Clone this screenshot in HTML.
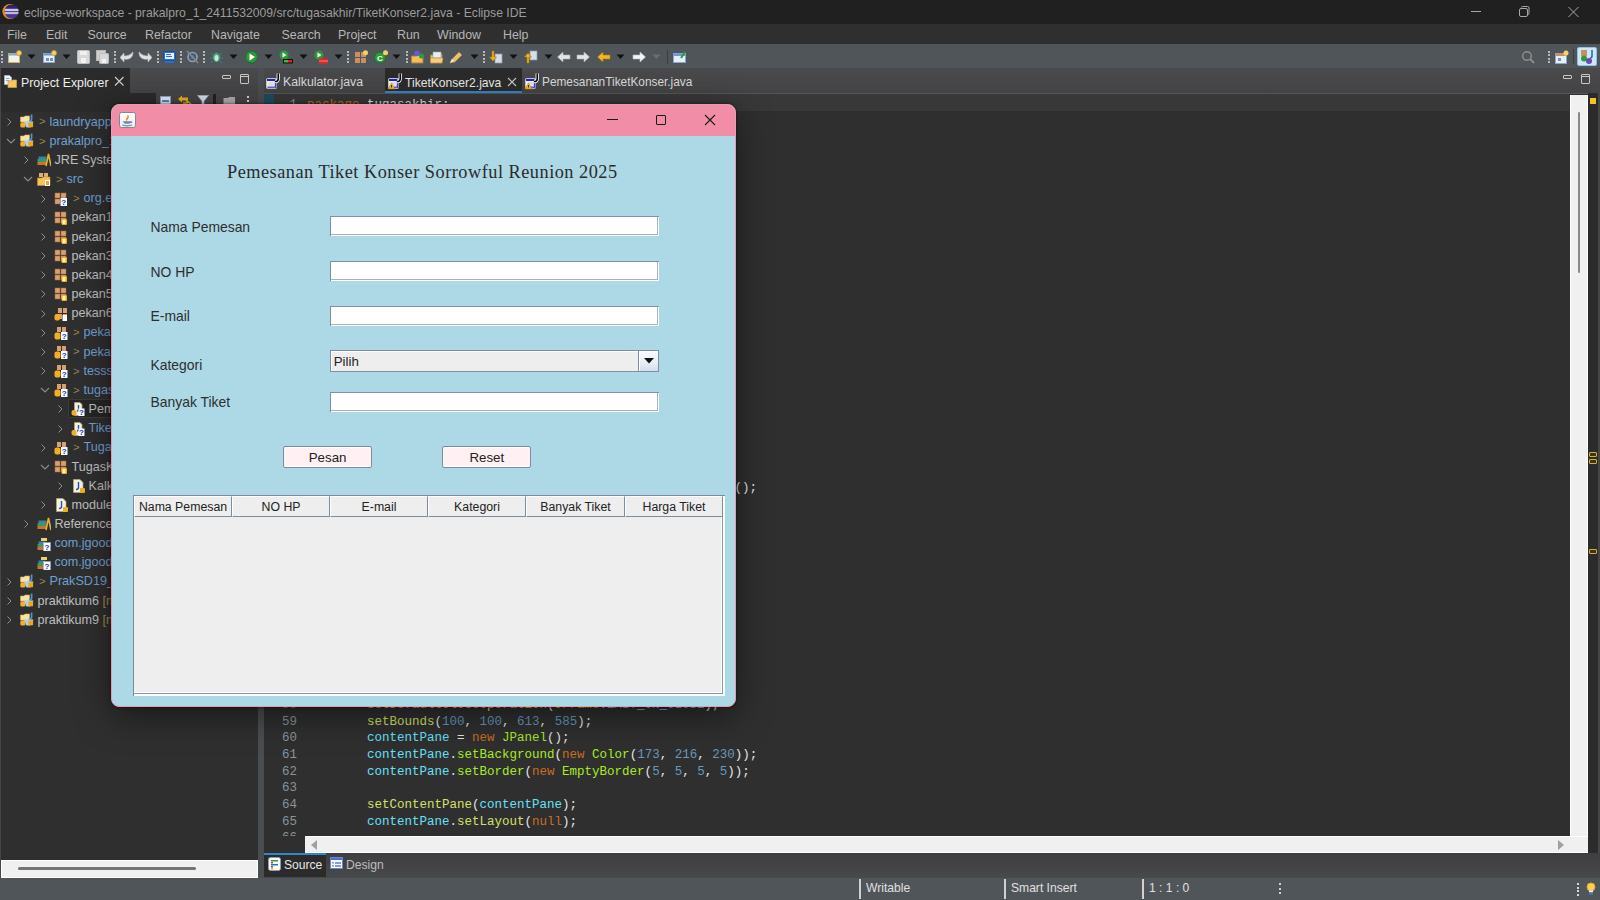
<!DOCTYPE html>
<html><head><meta charset="utf-8">
<style>
*{margin:0;padding:0;box-sizing:border-box}
html,body{width:1600px;height:900px;overflow:hidden;background:#2f2f2f;font-family:"Liberation Sans",sans-serif}
.a{position:absolute}
.t{position:absolute;white-space:nowrap;line-height:1}
svg{display:block}
</style></head><body>
<div class="a" style="left:0px;top:0px;width:1600px;height:24px;background:#202020;"></div>
<div class="a" style="left:0px;top:24px;width:1600px;height:20px;background:#2f2f2f;"></div>
<div class="a" style="left:0px;top:44px;width:1600px;height:24px;background:#50555a;"></div>
<div class="a" style="left:0px;top:68px;width:1600px;height:810px;background:#464647;"></div>
<div class="a" style="left:0px;top:68px;width:258px;height:25px;background:#464647;background:linear-gradient(#4a4a4c,#444446)"></div>
<div class="a" style="left:1px;top:68px;width:129px;height:25px;background:#2b2b2b;"></div>
<div class="a" style="left:1px;top:93px;width:257px;height:767px;background:#2f2f2f;"></div>
<div class="a" style="left:1px;top:93px;width:155px;height:19px;background:#2b2b2b;"></div>
<div class="a" style="left:156px;top:93px;width:102px;height:19px;background:#464647;"></div>
<div class="a" style="left:1px;top:860px;width:257px;height:18px;background:#ffffff;"></div>
<div class="a" style="left:2px;top:861px;width:255px;height:16px;background:#f0f0f0;"></div>
<div class="a" style="left:18px;top:867px;width:178px;height:3px;background:#747474;border-radius:1.5px"></div>
<div class="a" style="left:258px;top:68px;width:6px;height:810px;background:#4b4e50;"></div>
<div class="a" style="left:264px;top:68px;width:1336px;height:25px;background:#464647;background:linear-gradient(#4a4a4c,#444446)"></div>
<div class="a" style="left:385px;top:68px;width:137px;height:25px;background:#2b2b2b;"></div>
<div class="a" style="left:385px;top:91px;width:137px;height:2px;background:#3584c9;"></div>
<div class="a" style="left:264px;top:93px;width:1336px;height:760px;background:#2f2f2f;"></div>
<div class="a" style="left:264px;top:93px;width:1336px;height:1px;background:#555555;"></div>
<div class="a" style="left:264px;top:94px;width:1306px;height:17px;background:#383838;"></div>
<div class="a" style="left:1570px;top:95px;width:18px;height:758px;background:#f0f0f0;border-left:1px solid #fff;border-right:1px solid #fff;border-bottom:1px solid #fff"></div>
<div class="a" style="left:1578px;top:112px;width:2px;height:161px;background:#8a8a8a;border-radius:1px"></div>
<div class="a" style="left:1588px;top:93px;width:10px;height:760px;background:#2b2b2b;"></div>
<div class="a" style="left:1598px;top:93px;width:2px;height:785px;background:#464647;"></div>
<div class="a" style="left:1590px;top:98px;width:6px;height:6px;background:#f2c12e;"></div>
<div class="a" style="left:1589px;top:452px;width:8px;height:5px;background:#3a3420;border:1px solid #d4b030;border-radius:1px"></div>
<div class="a" style="left:1589px;top:459px;width:8px;height:5px;background:#3a3420;border:1px solid #d4b030;border-radius:1px"></div>
<div class="a" style="left:1589px;top:549px;width:8px;height:5px;background:#3a3420;border:1px solid #d4b030;border-radius:1px"></div>
<div class="a" style="left:305px;top:836px;width:1283px;height:17px;background:#f0f0f0;border-top:1px solid #fff;border-bottom:1px solid #fff"></div>
<svg class="a" style="left:310px;top:840px;" width="8" height="10" viewBox="0 0 8 10"><path d="M7 0 L1 5 L7 10 Z" fill="#a0a0a0"/></svg>
<svg class="a" style="left:1557px;top:840px;" width="8" height="10" viewBox="0 0 8 10"><path d="M1 0 L7 5 L1 10 Z" fill="#a0a0a0"/></svg>
<div class="a" style="left:264px;top:853px;width:1336px;height:25px;background:#434547;background:linear-gradient(#3e3e40,#48494b)"></div>
<div class="a" style="left:264px;top:853px;width:62px;height:24px;background:#2b2b2b;"></div>
<div class="a" style="left:264px;top:853px;width:62px;height:2px;background:#3584c9;"></div>
<div class="a" style="left:0px;top:878px;width:1600px;height:22px;background:#50555a;"></div>
<svg class="a" style="left:0px;top:0px;" width="24" height="24" viewBox="0 0 24 24"><defs><clipPath id="ec"><circle cx="11.6" cy="11.5" r="7.1"/></clipPath><linearGradient id="eg" x1="0" y1="0" x2="0" y2="1"><stop offset="0" stop-color="#2a1f66"/><stop offset="1" stop-color="#4a3a9e"/></linearGradient></defs><circle cx="10" cy="11.5" r="7.6" fill="#e8901c"/><circle cx="11.6" cy="11.5" r="7.1" fill="url(#eg)"/><g clip-path="url(#ec)"><rect x="0" y="8.8" width="24" height="2.3" fill="#cac6de"/><rect x="0" y="11.9" width="24" height="2.3" fill="#bcb8d4"/></g></svg>
<div class="t" style="left:24.00px;top:6.57px;font-size:12.2px;color:#9c9c9c;">eclipse-workspace - prakalpro_1_2411532009/src/tugasakhir/TiketKonser2.java - Eclipse IDE</div>
<div class="a" style="left:1471px;top:11px;width:10px;height:1px;background:#a8a8a8;"></div>
<svg class="a" style="left:1518px;top:5px;" width="13" height="13" viewBox="0 0 13 13"><rect x="1.5" y="3.5" width="8" height="8" rx="1.5" fill="none" stroke="#a8a8a8"/><path d="M3.5 2.5 a1 1 0 0 1 1 -1 H9.5 a1.5 1.5 0 0 1 1.5 1.5 V8.5 a1 1 0 0 1 -1 1" fill="none" stroke="#a8a8a8"/></svg>
<svg class="a" style="left:1567px;top:6px;" width="13" height="13" viewBox="0 0 13 13"><path d="M1.5 1 L11.5 11 M11.5 1 L1.5 11" stroke="#a8a8a8" stroke-width="1"/></svg>
<div class="t" style="left:7.00px;top:28.60px;font-size:12.4px;color:#b6b6b6;">File</div>
<div class="t" style="left:46.00px;top:28.60px;font-size:12.4px;color:#b6b6b6;">Edit</div>
<div class="t" style="left:87.50px;top:28.60px;font-size:12.4px;color:#b6b6b6;">Source</div>
<div class="t" style="left:145.00px;top:28.60px;font-size:12.4px;color:#b6b6b6;">Refactor</div>
<div class="t" style="left:211.00px;top:28.60px;font-size:12.4px;color:#b6b6b6;">Navigate</div>
<div class="t" style="left:281.50px;top:28.60px;font-size:12.4px;color:#b6b6b6;">Search</div>
<div class="t" style="left:338.00px;top:28.60px;font-size:12.4px;color:#b6b6b6;">Project</div>
<div class="t" style="left:397.00px;top:28.60px;font-size:12.4px;color:#b6b6b6;">Run</div>
<div class="t" style="left:437.00px;top:28.60px;font-size:12.4px;color:#b6b6b6;">Window</div>
<div class="t" style="left:503.00px;top:28.60px;font-size:12.4px;color:#b6b6b6;">Help</div>
<div class="a" style="left:1px;top:51.0px;width:2px;height:2px;background:#d8d8d8;border-radius:1px"></div>
<div class="a" style="left:1px;top:54.4px;width:2px;height:2px;background:#d8d8d8;border-radius:1px"></div>
<div class="a" style="left:1px;top:57.8px;width:2px;height:2px;background:#d8d8d8;border-radius:1px"></div>
<div class="a" style="left:1px;top:61.2px;width:2px;height:2px;background:#d8d8d8;border-radius:1px"></div>
<svg class="a" style="left:8px;top:50px;" width="14" height="14" viewBox="0 0 14 14"><rect x="0.5" y="3.5" width="11" height="9" fill="#f4f2e4" stroke="#c8b070"/><rect x="0.5" y="3.5" width="11" height="2" fill="#7aa8e0"/><circle cx="11" cy="3" r="2.5" fill="#f2d26a" stroke="#c89a2a" stroke-width=".8"/></svg>
<svg class="a" style="left:27px;top:54px;" width="9" height="6" viewBox="0 0 9 6"><path d="M0.5 0.5 H8.5 L4.5 5 Z" fill="#111"/></svg>
<svg class="a" style="left:43px;top:50px;" width="14" height="14" viewBox="0 0 14 14"><rect x="0.5" y="3.5" width="11" height="9" fill="#e8eef6" stroke="#8aa6c8"/><rect x="0.5" y="3.5" width="11" height="2" fill="#6a98d8"/><rect x="3" y="8" width="3" height="3" fill="#7a90b0"/><rect x="7" y="8" width="3" height="3" fill="#7a90b0"/><circle cx="11" cy="3" r="2.5" fill="#f2d26a" stroke="#c89a2a" stroke-width=".8"/></svg>
<svg class="a" style="left:62px;top:54px;" width="9" height="6" viewBox="0 0 9 6"><path d="M0.5 0.5 H8.5 L4.5 5 Z" fill="#111"/></svg>
<svg class="a" style="left:77px;top:50px;" width="14" height="14" viewBox="0 0 14 14"><rect x="0.5" y="0.5" width="12" height="13" rx="1" fill="#d8d8d8" stroke="#bdbdbd"/><rect x="3" y="1" width="7" height="4" fill="#f0f0f0"/><rect x="4" y="8" width="5" height="5" fill="#f2f2f2"/></svg>
<svg class="a" style="left:96px;top:50px;" width="14" height="14" viewBox="0 0 14 14"><rect x="0.5" y="0.5" width="9" height="10" fill="#cfcfcf" stroke="#b5b5b5"/><rect x="3.5" y="3.5" width="9" height="10" rx="1" fill="#d8d8d8" stroke="#bdbdbd"/><rect x="6" y="9" width="4" height="4" fill="#f2f2f2"/></svg>
<div class="a" style="left:114px;top:51.0px;width:2px;height:2px;background:#d8d8d8;border-radius:1px"></div>
<div class="a" style="left:114px;top:54.4px;width:2px;height:2px;background:#d8d8d8;border-radius:1px"></div>
<div class="a" style="left:114px;top:57.8px;width:2px;height:2px;background:#d8d8d8;border-radius:1px"></div>
<div class="a" style="left:114px;top:61.2px;width:2px;height:2px;background:#d8d8d8;border-radius:1px"></div>
<svg class="a" style="left:120px;top:50px;" width="14" height="14" viewBox="0 0 14 14"><path d="M13 2 C13 8 9 10 4 9 L4 12 L0 7.5 L4 3 L4 6 C8 6 10 5 13 2 Z" fill="#e2e2e2" stroke="#bcbcbc" stroke-width=".6"/></svg>
<svg class="a" style="left:138px;top:50px;" width="14" height="14" viewBox="0 0 14 14"><path d="M1 2 C1 8 5 10 10 9 L10 12 L14 7.5 L10 3 L10 6 C6 6 4 5 1 2 Z" fill="#e2e2e2" stroke="#bcbcbc" stroke-width=".6"/></svg>
<div class="a" style="left:157px;top:51.0px;width:2px;height:2px;background:#d8d8d8;border-radius:1px"></div>
<div class="a" style="left:157px;top:54.4px;width:2px;height:2px;background:#d8d8d8;border-radius:1px"></div>
<div class="a" style="left:157px;top:57.8px;width:2px;height:2px;background:#d8d8d8;border-radius:1px"></div>
<div class="a" style="left:157px;top:61.2px;width:2px;height:2px;background:#d8d8d8;border-radius:1px"></div>
<svg class="a" style="left:163px;top:50px;" width="13" height="14" viewBox="0 0 13 14"><rect x="0.5" y="1.5" width="12" height="9" rx="1" fill="#2d6fd0" stroke="#1c4c9a"/><rect x="2" y="3" width="9" height="6" fill="#e8f0ff"/><rect x="3" y="4" width="5" height="1" fill="#2d6fd0"/><rect x="3" y="6" width="6" height="1" fill="#2d6fd0"/><rect x="2" y="11" width="9" height="2" fill="#2d6fd0"/></svg>
<div class="a" style="left:180px;top:51.0px;width:2px;height:2px;background:#d8d8d8;border-radius:1px"></div>
<div class="a" style="left:180px;top:54.4px;width:2px;height:2px;background:#d8d8d8;border-radius:1px"></div>
<div class="a" style="left:180px;top:57.8px;width:2px;height:2px;background:#d8d8d8;border-radius:1px"></div>
<div class="a" style="left:180px;top:61.2px;width:2px;height:2px;background:#d8d8d8;border-radius:1px"></div>
<svg class="a" style="left:186px;top:50px;" width="13" height="14" viewBox="0 0 13 14"><circle cx="6.5" cy="7" r="4.5" fill="none" stroke="#8ca2b8" stroke-width="1.6"/><circle cx="6.5" cy="7" r="2" fill="#3a78c8"/><path d="M1 1 L12 13" stroke="#8a8a8a" stroke-width="1.3"/></svg>
<div class="a" style="left:203px;top:51.0px;width:2px;height:2px;background:#d8d8d8;border-radius:1px"></div>
<div class="a" style="left:203px;top:54.4px;width:2px;height:2px;background:#d8d8d8;border-radius:1px"></div>
<div class="a" style="left:203px;top:57.8px;width:2px;height:2px;background:#d8d8d8;border-radius:1px"></div>
<div class="a" style="left:203px;top:61.2px;width:2px;height:2px;background:#d8d8d8;border-radius:1px"></div>
<svg class="a" style="left:210px;top:50px;" width="13" height="14" viewBox="0 0 13 14"><ellipse cx="6.5" cy="7.5" rx="4" ry="5" fill="#5a9a8a" stroke="#2c6a62"/><ellipse cx="6.5" cy="8" rx="2" ry="3" fill="#d8e8c0"/><path d="M1 3 L3 5 M12 3 L10 5 M0 8 H2.5 M13 8 H10.5 M1 13 L3 11 M12 13 L10 11" stroke="#2c8a82" stroke-width="1"/></svg>
<svg class="a" style="left:229px;top:54px;" width="9" height="6" viewBox="0 0 9 6"><path d="M0.5 0.5 H8.5 L4.5 5 Z" fill="#111"/></svg>
<svg class="a" style="left:245px;top:50px;" width="13" height="14" viewBox="0 0 13 14"><circle cx="6.5" cy="7" r="6" fill="#2e9a3a" stroke="#1f6e28"/><path d="M4.5 3.5 L10 7 L4.5 10.5 Z" fill="#fff"/></svg>
<svg class="a" style="left:264px;top:54px;" width="9" height="6" viewBox="0 0 9 6"><path d="M0.5 0.5 H8.5 L4.5 5 Z" fill="#111"/></svg>
<svg class="a" style="left:279px;top:50px;" width="14" height="14" viewBox="0 0 14 14"><circle cx="5" cy="5" r="4.5" fill="#2e9a3a"/><path d="M3.5 2.5 L7.5 5 L3.5 7.5 Z" fill="#fff"/><rect x="4" y="9" width="10" height="4.5" fill="#111"/><rect x="5" y="10" width="4" height="2.5" fill="#2ec02e"/><rect x="9" y="10" width="4" height="2.5" fill="#e02020"/></svg>
<svg class="a" style="left:299px;top:54px;" width="9" height="6" viewBox="0 0 9 6"><path d="M0.5 0.5 H8.5 L4.5 5 Z" fill="#111"/></svg>
<svg class="a" style="left:314px;top:50px;" width="14" height="14" viewBox="0 0 14 14"><circle cx="5" cy="5" r="4.5" fill="#2e9a3a"/><path d="M3.5 2.5 L7.5 5 L3.5 7.5 Z" fill="#fff"/><rect x="5" y="8.5" width="9" height="5.5" rx="1" fill="#d82828"/><rect x="8" y="7.5" width="3" height="1.5" fill="#d82828"/><rect x="5" y="10.5" width="9" height="1" fill="#ff8080"/></svg>
<svg class="a" style="left:334px;top:54px;" width="9" height="6" viewBox="0 0 9 6"><path d="M0.5 0.5 H8.5 L4.5 5 Z" fill="#111"/></svg>
<div class="a" style="left:347px;top:51.0px;width:2px;height:2px;background:#d8d8d8;border-radius:1px"></div>
<div class="a" style="left:347px;top:54.4px;width:2px;height:2px;background:#d8d8d8;border-radius:1px"></div>
<div class="a" style="left:347px;top:57.8px;width:2px;height:2px;background:#d8d8d8;border-radius:1px"></div>
<div class="a" style="left:347px;top:61.2px;width:2px;height:2px;background:#d8d8d8;border-radius:1px"></div>
<svg class="a" style="left:354px;top:50px;" width="14" height="14" viewBox="0 0 14 14"><rect x="1" y="2" width="5" height="5" fill="#c89060"/><rect x="7" y="2" width="5" height="5" fill="#c89060"/><rect x="1" y="8" width="5" height="5" fill="#c89060"/><rect x="7" y="8" width="5" height="5" fill="#c89060"/><circle cx="11.5" cy="2.8" r="2.5" fill="#f2d26a"/></svg>
<svg class="a" style="left:374px;top:50px;" width="14" height="14" viewBox="0 0 14 14"><circle cx="6" cy="7.5" r="5.5" fill="#2e9a3a" stroke="#1f6e28"/><text x="3" y="11" font-size="8" font-family="Liberation Sans" font-weight="bold" fill="#fff">C</text><circle cx="11.5" cy="2.8" r="2.5" fill="#f2d26a"/></svg>
<svg class="a" style="left:392px;top:54px;" width="9" height="6" viewBox="0 0 9 6"><path d="M0.5 0.5 H8.5 L4.5 5 Z" fill="#111"/></svg>
<div class="a" style="left:406px;top:51.0px;width:2px;height:2px;background:#d8d8d8;border-radius:1px"></div>
<div class="a" style="left:406px;top:54.4px;width:2px;height:2px;background:#d8d8d8;border-radius:1px"></div>
<div class="a" style="left:406px;top:57.8px;width:2px;height:2px;background:#d8d8d8;border-radius:1px"></div>
<div class="a" style="left:406px;top:61.2px;width:2px;height:2px;background:#d8d8d8;border-radius:1px"></div>
<svg class="a" style="left:411px;top:50px;" width="14" height="14" viewBox="0 0 14 14"><path d="M0.5 6 H5 L6 5 H12 V13 H0.5 Z" fill="#f0c060" stroke="#b08030"/><circle cx="6" cy="3.5" r="2.8" fill="#6a5ad0"/><circle cx="10.5" cy="6" r="2.5" fill="#2e9a3a"/></svg>
<svg class="a" style="left:430px;top:50px;" width="14" height="14" viewBox="0 0 14 14"><path d="M0.5 5 H5 L6 4 H12 V13 H0.5 Z" fill="#f0c060" stroke="#b08030"/><rect x="3" y="2" width="8" height="6" fill="#e8eef6" stroke="#8aa6c8" stroke-width=".6"/><path d="M0.5 8 H13 L12 13 H0.5 Z" fill="#f4d080" stroke="#b08030" stroke-width=".6"/></svg>
<svg class="a" style="left:449px;top:50px;" width="14" height="14" viewBox="0 0 14 14"><path d="M1 13 L3 9 L10 2 L13 5 L6 12 Z" fill="#e8c070" stroke="#a88040" stroke-width=".7"/><path d="M1 13 L3 9 L5 11 Z" fill="#f0f0f0"/></svg>
<svg class="a" style="left:470px;top:54px;" width="9" height="6" viewBox="0 0 9 6"><path d="M0.5 0.5 H8.5 L4.5 5 Z" fill="#111"/></svg>
<div class="a" style="left:483px;top:51.0px;width:2px;height:2px;background:#d8d8d8;border-radius:1px"></div>
<div class="a" style="left:483px;top:54.4px;width:2px;height:2px;background:#d8d8d8;border-radius:1px"></div>
<div class="a" style="left:483px;top:57.8px;width:2px;height:2px;background:#d8d8d8;border-radius:1px"></div>
<div class="a" style="left:483px;top:61.2px;width:2px;height:2px;background:#d8d8d8;border-radius:1px"></div>
<svg class="a" style="left:489px;top:50px;" width="14" height="14" viewBox="0 0 14 14"><rect x="6" y="4" width="7" height="9" fill="#d8dde6" stroke="#8a9ab0" stroke-width=".7"/><path d="M3 1 V7 H0.5 L4 11 L7.5 7 H5 V1 Z" fill="#f0b020" stroke="#b07a10" stroke-width=".6"/></svg>
<svg class="a" style="left:509px;top:54px;" width="9" height="6" viewBox="0 0 9 6"><path d="M0.5 0.5 H8.5 L4.5 5 Z" fill="#111"/></svg>
<svg class="a" style="left:524px;top:50px;" width="14" height="14" viewBox="0 0 14 14"><rect x="6" y="1" width="7" height="9" fill="#d8dde6" stroke="#8a9ab0" stroke-width=".7"/><path d="M3 13 V7 H0.5 L4 3 L7.5 7 H5 V13 Z" fill="#f0b020" stroke="#b07a10" stroke-width=".6"/></svg>
<svg class="a" style="left:544px;top:54px;" width="9" height="6" viewBox="0 0 9 6"><path d="M0.5 0.5 H8.5 L4.5 5 Z" fill="#111"/></svg>
<svg class="a" style="left:557px;top:50px;" width="14" height="14" viewBox="0 0 14 14"><path d="M0.5 7 L6 2 V5 H13 V9 H6 V12 Z" fill="#e4e4e4" stroke="#b0b0b0" stroke-width=".6"/></svg>
<svg class="a" style="left:576px;top:50px;" width="14" height="14" viewBox="0 0 14 14"><path d="M13.5 7 L8 2 V5 H1 V9 H8 V12 Z" fill="#e4e4e4" stroke="#b0b0b0" stroke-width=".6"/></svg>
<svg class="a" style="left:597px;top:50px;" width="14" height="14" viewBox="0 0 14 14"><path d="M0.5 7 L6 2 V5 H13 V9 H6 V12 Z" fill="#f2b820" stroke="#b07a10" stroke-width=".6"/></svg>
<svg class="a" style="left:616px;top:54px;" width="9" height="6" viewBox="0 0 9 6"><path d="M0.5 0.5 H8.5 L4.5 5 Z" fill="#111"/></svg>
<svg class="a" style="left:632px;top:50px;" width="14" height="14" viewBox="0 0 14 14"><path d="M13.5 7 L8 2 V5 H1 V9 H8 V12 Z" fill="#f4f4f4" stroke="#c0c0c0" stroke-width=".6"/></svg>
<svg class="a" style="left:652px;top:54px;" width="9" height="6" viewBox="0 0 9 6"><path d="M0.5 0.5 H8.5 L4.5 5 Z" fill="#6a6e72"/></svg>
<div class="a" style="left:667px;top:50px;width:1px;height:14px;background:#3a3e41;"></div>
<svg class="a" style="left:673px;top:50px;" width="14" height="14" viewBox="0 0 14 14"><rect x="0.5" y="3.5" width="12" height="9" fill="#e8eef6" stroke="#8aa6c8"/><rect x="0.5" y="3.5" width="12" height="2.5" fill="#6a98d8"/><path d="M8 8 L12 2" stroke="#2e9a3a" stroke-width="2"/></svg>
<svg class="a" style="left:1521px;top:50px;" width="15" height="15" viewBox="0 0 15 15"><circle cx="6" cy="6" r="4.3" fill="none" stroke="#8e8e8e" stroke-width="1.5"/><path d="M9 9 L13 13" stroke="#8e8e8e" stroke-width="1.8"/></svg>
<div class="a" style="left:1548px;top:51.0px;width:2px;height:2px;background:#d8d8d8;border-radius:1px"></div>
<div class="a" style="left:1548px;top:54.4px;width:2px;height:2px;background:#d8d8d8;border-radius:1px"></div>
<div class="a" style="left:1548px;top:57.8px;width:2px;height:2px;background:#d8d8d8;border-radius:1px"></div>
<div class="a" style="left:1548px;top:61.2px;width:2px;height:2px;background:#d8d8d8;border-radius:1px"></div>
<svg class="a" style="left:1555px;top:50px;" width="14" height="14" viewBox="0 0 14 14"><rect x="0.5" y="3.5" width="11" height="10" fill="#e8eef6" stroke="#8aa6c8"/><rect x="0.5" y="3.5" width="11" height="2.5" fill="#c89060"/><rect x="3" y="8" width="3" height="3" fill="#7a90b0"/><circle cx="11" cy="3" r="2.5" fill="#f2d26a"/></svg>
<div class="a" style="left:1573px;top:49px;width:1px;height:15px;background:#3a3e41;"></div>
<div class="a" style="left:1577px;top:47px;width:20px;height:19px;background:#cfe6f8;border:1px solid #90c0e8;border-radius:2px"></div>
<svg class="a" style="left:1580px;top:49px;" width="15" height="15" viewBox="0 0 15 15"><rect x="1" y="1" width="6" height="6" fill="#c89060"/><path d="M12 1 V7 Q12 9 10 9" fill="none" stroke="#2060c0" stroke-width="1.5"/><circle cx="4" cy="9.5" r="3" fill="#2e9a3a"/><circle cx="9" cy="12" r="3" fill="#6a4ab0"/></svg>
<svg class="a" style="left:4px;top:75px;" width="14" height="14" viewBox="0 0 14 14"><path d="M0.5 0.5 H5.5 L7.5 2.5 V9.5 H0.5 Z" fill="#eef2fa" stroke="#a8b8d0" stroke-width=".8"/><rect x="2" y="3" width="3.5" height=".8" fill="#7890b8"/><rect x="2" y="5" width="3.5" height=".8" fill="#7890b8"/><path d="M4 6 H7.5 L8.5 5 H12.5 V12.5 H4 Z" fill="#f4c860" stroke="#d8a040" stroke-width=".7"/></svg>
<div class="t" style="left:21.00px;top:76.59px;font-size:12.3px;color:#eeeeee;">Project Explorer</div>
<svg class="a" style="left:114px;top:76px;" width="11" height="11" viewBox="0 0 11 11"><path d="M1 1 L9.5 9.5 M9.5 1 L1 9.5" stroke="#d0d0d0" stroke-width="1.1"/></svg>
<div class="a" style="left:222px;top:75px;width:9px;height:4px;background:transparent;border:1px solid #c8c8c8;border-radius:1px"></div>
<div class="a" style="left:240px;top:74px;width:9px;height:10px;background:transparent;border:1px solid #c8c8c8;border-radius:1px"></div>
<div class="a" style="left:241px;top:76px;width:7px;height:1px;background:#c8c8c8;"></div>
<div class="a" style="left:1563px;top:75px;width:9px;height:4px;background:transparent;border:1px solid #c8c8c8;border-radius:1px"></div>
<div class="a" style="left:1581px;top:74px;width:9px;height:10px;background:transparent;border:1px solid #c8c8c8;border-radius:1px"></div>
<div class="a" style="left:1582px;top:76px;width:7px;height:1px;background:#c8c8c8;"></div>
<svg class="a" style="left:160px;top:96px;" width="13" height="10" viewBox="0 0 13 10"><rect x="0.5" y="0.5" width="10" height="9" fill="#e8eef6" stroke="#8aa6c8"/><rect x="2" y="4" width="7" height="2" fill="#5a88c8"/></svg>
<svg class="a" style="left:177px;top:95px;" width="15" height="10" viewBox="0 0 15 10"><path d="M1 4 L5 0.5 V2.5 H11 V5.5 H5 V7.5 Z" fill="#f0b020"/><path d="M14 9 L10 6 V8 H6" stroke="#f0b020" stroke-width="1.5" fill="none"/></svg>
<svg class="a" style="left:197px;top:95px;" width="12" height="10" viewBox="0 0 12 10"><path d="M0.5 0.5 H11.5 L7 6 V10 H5 V6 Z" fill="#d8e4f0" stroke="#a0b4c8" stroke-width=".7"/></svg>
<div class="a" style="left:213px;top:94px;width:3px;height:10px;background:#222;"></div>
<svg class="a" style="left:223px;top:96px;" width="13" height="9" viewBox="0 0 13 9"><path d="M0.5 2 H5 L6 1 H12 V9 H0.5 Z" fill="#b0b0b0"/></svg>
<div class="a" style="left:247px;top:96px;width:2px;height:2px;background:#d8d8d8;"></div>
<div class="a" style="left:247px;top:100px;width:2px;height:2px;background:#d8d8d8;"></div>
<svg class="a" style="left:265px;top:72px;" width="16" height="18" viewBox="0 0 16 18"><rect x="1.5" y="6.5" width="10" height="10" rx="1" fill="#f4f2e6" stroke="#cfc8a8"/><rect x="2" y="7" width="8.5" height="2" fill="#1a22e0"/><rect x="9.8" y="8" width="1.6" height="8" fill="#3a3ad0"/><rect x="2.5" y="14.5" width="8" height="1.6" fill="#6060d8"/><rect x="3.5" y="10" width="5" height="3.5" fill="#e0e0e0"/><path d="M13.2 1.5 V7 Q13.2 9.6 10 9.6" fill="none" stroke="#fff" stroke-width="3.2"/><path d="M13.2 1.5 V7 Q13.2 9.6 10 9.6" fill="none" stroke="#000" stroke-width="1.5"/></svg>
<div class="t" style="left:283.00px;top:76.39px;font-size:12.3px;color:#dadada;">Kalkulator.java</div>
<svg class="a" style="left:387px;top:72px;" width="16" height="18" viewBox="0 0 16 18"><rect x="1.5" y="6.5" width="10" height="10" rx="1" fill="#f4f2e6" stroke="#cfc8a8"/><rect x="2" y="7" width="8.5" height="2" fill="#1a22e0"/><rect x="9.8" y="8" width="1.6" height="8" fill="#3a3ad0"/><rect x="2.5" y="14.5" width="8" height="1.6" fill="#6060d8"/><rect x="3.5" y="10" width="5" height="3.5" fill="#e0e0e0"/><path d="M13.2 1.5 V7 Q13.2 9.6 10 9.6" fill="none" stroke="#fff" stroke-width="3.2"/><path d="M13.2 1.5 V7 Q13.2 9.6 10 9.6" fill="none" stroke="#000" stroke-width="1.5"/><path d="M1 17 L4.5 11 L8 17 Z" fill="#f2b830" stroke="#c08010" stroke-width=".5"/><rect x="4" y="13" width="1" height="2.5" fill="#333"/></svg>
<div class="t" style="left:405.00px;top:76.56px;font-size:12.1px;color:#e8e8e8;">TiketKonser2.java</div>
<svg class="a" style="left:507px;top:77px;" width="10" height="10" viewBox="0 0 10 10"><path d="M1 1 L9 9 M9 1 L1 9" stroke="#c8c8c8" stroke-width="1.1"/></svg>
<svg class="a" style="left:524px;top:72px;" width="16" height="18" viewBox="0 0 16 18"><rect x="1.5" y="6.5" width="10" height="10" rx="1" fill="#f4f2e6" stroke="#cfc8a8"/><rect x="2" y="7" width="8.5" height="2" fill="#1a22e0"/><rect x="9.8" y="8" width="1.6" height="8" fill="#3a3ad0"/><rect x="2.5" y="14.5" width="8" height="1.6" fill="#6060d8"/><rect x="3.5" y="10" width="5" height="3.5" fill="#e0e0e0"/><path d="M13.2 1.5 V7 Q13.2 9.6 10 9.6" fill="none" stroke="#fff" stroke-width="3.2"/><path d="M13.2 1.5 V7 Q13.2 9.6 10 9.6" fill="none" stroke="#000" stroke-width="1.5"/><path d="M1 17 L4.5 11 L8 17 Z" fill="#f2b830" stroke="#c08010" stroke-width=".5"/><rect x="4" y="13" width="1" height="2.5" fill="#333"/></svg>
<div class="t" style="left:542.00px;top:77.17px;font-size:11.85px;color:#dadada;">PemesananTiketKonser.java</div>
<div class="a" style="left:68px;top:399px;width:190px;height:19px;background:#262626;border:1px solid #3c3c3c;border-radius:2px"></div>
<svg class="a" style="left:6px;top:117px;" width="7" height="10" viewBox="0 0 7 10"><path d="M1.5 1.5 L5 5 L1.5 8.5" fill="none" stroke="#8e8e8e" stroke-width="1"/></svg>
<svg class="a" style="left:20px;top:114px;" width="14" height="14" viewBox="0 0 14 14"><path d="M0.5 3 H4 L5 2 H9.5 V8 H0.5 Z" fill="#f8e4a0" stroke="#d0b070" stroke-width=".6"/><path d="M11.6 0.5 V5 Q11.6 7.2 8.8 7.2" fill="none" stroke="#5a8ed0" stroke-width="1.7"/><path d="M3.5 7.5 H13.5 L10.5 13.5 H6.5 Z" fill="#a8d4f4"/><rect x="0.3" y="8.3" width="5.2" height="5.2" rx="1.6" fill="#f0b030"/><rect x="8.3" y="8.6" width="4.8" height="4.6" rx=".6" fill="#f2a418"/></svg>
<div class="t" style="left:39.00px;top:116.43px;font-size:11.3px;color:#98844a;">&gt;</div>
<div class="t" style="left:49.50px;top:115.63px;font-size:12.6px;color:#70a0d2;">laundryapp</div>
<svg class="a" style="left:6px;top:138px;" width="10" height="7" viewBox="0 0 10 7"><path d="M1 1 L5 5 L9 1" fill="none" stroke="#8a8a8a" stroke-width="1.1"/></svg>
<svg class="a" style="left:20px;top:133px;" width="14" height="14" viewBox="0 0 14 14"><path d="M0.5 3 H4 L5 2 H9.5 V8 H0.5 Z" fill="#f8e4a0" stroke="#d0b070" stroke-width=".6"/><path d="M11.6 0.5 V5 Q11.6 7.2 8.8 7.2" fill="none" stroke="#5a8ed0" stroke-width="1.7"/><path d="M3.5 7.5 H13.5 L10.5 13.5 H6.5 Z" fill="#a8d4f4"/><rect x="0.3" y="8.3" width="5.2" height="5.2" rx="1.6" fill="#f0b030"/><rect x="8.3" y="8.6" width="4.8" height="4.6" rx=".6" fill="#f2a418"/></svg>
<div class="t" style="left:39.00px;top:135.59px;font-size:11.3px;color:#98844a;">&gt;</div>
<div class="t" style="left:49.50px;top:134.79px;font-size:12.6px;color:#70a0d2;">prakalpro_1_2411532009</div>
<svg class="a" style="left:23px;top:155px;" width="7" height="10" viewBox="0 0 7 10"><path d="M1.5 1.5 L5 5 L1.5 8.5" fill="none" stroke="#8e8e8e" stroke-width="1"/></svg>
<svg class="a" style="left:37px;top:153px;" width="14" height="14" viewBox="0 0 14 14"><rect x="0.5" y="9" width="9" height="3" fill="#d07030"/><rect x="0.5" y="6" width="9" height="3" fill="#3a9a5a"/><rect x="1.5" y="3.5" width="8" height="2.5" fill="#3a80b0"/><path d="M9 13 L11.5 1 L14 13" fill="none" stroke="#e8b030" stroke-width="1.6"/></svg>
<div class="t" style="left:54.50px;top:153.95px;font-size:12.6px;color:#c0c0c0;">JRE System Library [JavaSE-21]</div>
<svg class="a" style="left:23px;top:176px;" width="10" height="7" viewBox="0 0 10 7"><path d="M1 1 L5 5 L9 1" fill="none" stroke="#8a8a8a" stroke-width="1.1"/></svg>
<svg class="a" style="left:37px;top:172px;" width="14" height="14" viewBox="0 0 14 14"><rect x="2" y="1" width="4" height="4" fill="#e0b070"/><rect x="7" y="1" width="4" height="4" fill="#e0b070"/><path d="M0.5 6 H5 L6 5 H13 V13.5 H0.5 Z" fill="#f2c45a" stroke="#c08a30" stroke-width=".7"/><rect x="8" y="8" width="5" height="6" fill="#fff"/><rect x="9" y="9" width="3" height="4" fill="#e8a830"/></svg>
<div class="t" style="left:56.00px;top:173.91px;font-size:11.3px;color:#98844a;">&gt;</div>
<div class="t" style="left:66.50px;top:173.11px;font-size:12.6px;color:#70a0d2;">src</div>
<svg class="a" style="left:40px;top:194px;" width="7" height="10" viewBox="0 0 7 10"><path d="M1.5 1.5 L5 5 L1.5 8.5" fill="none" stroke="#8e8e8e" stroke-width="1"/></svg>
<svg class="a" style="left:54px;top:192px;" width="14" height="14" viewBox="0 0 14 14"><rect x="1" y="1" width="5" height="5" fill="#d8a070" stroke="#a06a40" stroke-width=".5"/><rect x="7" y="1" width="5" height="5" fill="#d8a070" stroke="#a06a40" stroke-width=".5"/><rect x="1" y="7" width="5" height="5" fill="#d8a070" stroke="#a06a40" stroke-width=".5"/><rect x="6.5" y="6" width="6.5" height="8" fill="#fff"/><text x="7.3" y="13" font-size="8" font-weight="bold" font-family="Liberation Sans" fill="#2030b0">?</text></svg>
<div class="t" style="left:73.00px;top:193.07px;font-size:11.3px;color:#98844a;">&gt;</div>
<div class="t" style="left:83.50px;top:192.27px;font-size:12.6px;color:#70a0d2;">org.eclipse.wb.swing</div>
<svg class="a" style="left:40px;top:213px;" width="7" height="10" viewBox="0 0 7 10"><path d="M1.5 1.5 L5 5 L1.5 8.5" fill="none" stroke="#8e8e8e" stroke-width="1"/></svg>
<svg class="a" style="left:54px;top:211px;" width="14" height="14" viewBox="0 0 14 14"><rect x="1" y="1" width="5" height="5" fill="#d8a070" stroke="#a06a40" stroke-width=".5"/><rect x="7" y="1" width="5" height="5" fill="#d8a070" stroke="#a06a40" stroke-width=".5"/><rect x="1" y="7" width="5" height="5" fill="#d8a070" stroke="#a06a40" stroke-width=".5"/><rect x="7" y="7" width="5" height="5" fill="#d8a070" stroke="#a06a40" stroke-width=".5"/><rect x="7.5" y="8" width="5.5" height="6" rx="1" fill="#f2b020"/><rect x="8.5" y="9" width="3" height="4" fill="#fff3c0"/></svg>
<div class="t" style="left:71.50px;top:211.43px;font-size:12.6px;color:#c0c0c0;">pekan1</div>
<svg class="a" style="left:40px;top:232px;" width="7" height="10" viewBox="0 0 7 10"><path d="M1.5 1.5 L5 5 L1.5 8.5" fill="none" stroke="#8e8e8e" stroke-width="1"/></svg>
<svg class="a" style="left:54px;top:230px;" width="14" height="14" viewBox="0 0 14 14"><rect x="1" y="1" width="5" height="5" fill="#d8a070" stroke="#a06a40" stroke-width=".5"/><rect x="7" y="1" width="5" height="5" fill="#d8a070" stroke="#a06a40" stroke-width=".5"/><rect x="1" y="7" width="5" height="5" fill="#d8a070" stroke="#a06a40" stroke-width=".5"/><rect x="7" y="7" width="5" height="5" fill="#d8a070" stroke="#a06a40" stroke-width=".5"/><rect x="7.5" y="8" width="5.5" height="6" rx="1" fill="#f2b020"/><rect x="8.5" y="9" width="3" height="4" fill="#fff3c0"/></svg>
<div class="t" style="left:71.50px;top:230.59px;font-size:12.6px;color:#c0c0c0;">pekan2</div>
<svg class="a" style="left:40px;top:251px;" width="7" height="10" viewBox="0 0 7 10"><path d="M1.5 1.5 L5 5 L1.5 8.5" fill="none" stroke="#8e8e8e" stroke-width="1"/></svg>
<svg class="a" style="left:54px;top:249px;" width="14" height="14" viewBox="0 0 14 14"><rect x="1" y="1" width="5" height="5" fill="#d8a070" stroke="#a06a40" stroke-width=".5"/><rect x="7" y="1" width="5" height="5" fill="#d8a070" stroke="#a06a40" stroke-width=".5"/><rect x="1" y="7" width="5" height="5" fill="#d8a070" stroke="#a06a40" stroke-width=".5"/><rect x="7" y="7" width="5" height="5" fill="#d8a070" stroke="#a06a40" stroke-width=".5"/><rect x="7.5" y="8" width="5.5" height="6" rx="1" fill="#f2b020"/><rect x="8.5" y="9" width="3" height="4" fill="#fff3c0"/></svg>
<div class="t" style="left:71.50px;top:249.75px;font-size:12.6px;color:#c0c0c0;">pekan3</div>
<svg class="a" style="left:40px;top:270px;" width="7" height="10" viewBox="0 0 7 10"><path d="M1.5 1.5 L5 5 L1.5 8.5" fill="none" stroke="#8e8e8e" stroke-width="1"/></svg>
<svg class="a" style="left:54px;top:268px;" width="14" height="14" viewBox="0 0 14 14"><rect x="1" y="1" width="5" height="5" fill="#d8a070" stroke="#a06a40" stroke-width=".5"/><rect x="7" y="1" width="5" height="5" fill="#d8a070" stroke="#a06a40" stroke-width=".5"/><rect x="1" y="7" width="5" height="5" fill="#d8a070" stroke="#a06a40" stroke-width=".5"/><rect x="7" y="7" width="5" height="5" fill="#d8a070" stroke="#a06a40" stroke-width=".5"/><rect x="7.5" y="8" width="5.5" height="6" rx="1" fill="#f2b020"/><rect x="8.5" y="9" width="3" height="4" fill="#fff3c0"/></svg>
<div class="t" style="left:71.50px;top:268.91px;font-size:12.6px;color:#c0c0c0;">pekan4</div>
<svg class="a" style="left:40px;top:289px;" width="7" height="10" viewBox="0 0 7 10"><path d="M1.5 1.5 L5 5 L1.5 8.5" fill="none" stroke="#8e8e8e" stroke-width="1"/></svg>
<svg class="a" style="left:54px;top:287px;" width="14" height="14" viewBox="0 0 14 14"><rect x="1" y="1" width="5" height="5" fill="#d8a070" stroke="#a06a40" stroke-width=".5"/><rect x="7" y="1" width="5" height="5" fill="#d8a070" stroke="#a06a40" stroke-width=".5"/><rect x="1" y="7" width="5" height="5" fill="#d8a070" stroke="#a06a40" stroke-width=".5"/><rect x="7" y="7" width="5" height="5" fill="#d8a070" stroke="#a06a40" stroke-width=".5"/><rect x="7.5" y="8" width="5.5" height="6" rx="1" fill="#f2b020"/><rect x="8.5" y="9" width="3" height="4" fill="#fff3c0"/></svg>
<div class="t" style="left:71.50px;top:288.07px;font-size:12.6px;color:#c0c0c0;">pekan5</div>
<svg class="a" style="left:40px;top:309px;" width="7" height="10" viewBox="0 0 7 10"><path d="M1.5 1.5 L5 5 L1.5 8.5" fill="none" stroke="#8e8e8e" stroke-width="1"/></svg>
<svg class="a" style="left:54px;top:307px;" width="14" height="14" viewBox="0 0 14 14"><rect x="4" y="1" width="4" height="5" fill="#d8a070"/><rect x="9" y="1" width="4" height="5" fill="#d8a070"/><rect x="4" y="7" width="4" height="5" fill="#d8a070"/><rect x="9" y="7" width="4" height="5" fill="#d8a070"/><rect x="0.5" y="7" width="5.5" height="6.5" rx="2" fill="#f2b020"/><rect x="8.5" y="8" width="4.5" height="6" fill="#fff"/></svg>
<div class="t" style="left:71.50px;top:307.23px;font-size:12.6px;color:#c0c0c0;">pekan6</div>
<svg class="a" style="left:40px;top:328px;" width="7" height="10" viewBox="0 0 7 10"><path d="M1.5 1.5 L5 5 L1.5 8.5" fill="none" stroke="#8e8e8e" stroke-width="1"/></svg>
<svg class="a" style="left:54px;top:326px;" width="14" height="14" viewBox="0 0 14 14"><rect x="3" y="1" width="4" height="5" fill="#d8a070"/><rect x="8" y="1" width="4" height="5" fill="#d8a070"/><rect x="0.5" y="6.5" width="6" height="7" rx="2" fill="#f2b020"/><rect x="7" y="6" width="6.5" height="8" fill="#fff"/><text x="7.8" y="13" font-size="8" font-weight="bold" font-family="Liberation Sans" fill="#2030b0">?</text></svg>
<div class="t" style="left:73.00px;top:327.19px;font-size:11.3px;color:#98844a;">&gt;</div>
<div class="t" style="left:83.50px;top:326.39px;font-size:12.6px;color:#70a0d2;">pekan7</div>
<svg class="a" style="left:40px;top:347px;" width="7" height="10" viewBox="0 0 7 10"><path d="M1.5 1.5 L5 5 L1.5 8.5" fill="none" stroke="#8e8e8e" stroke-width="1"/></svg>
<svg class="a" style="left:54px;top:345px;" width="14" height="14" viewBox="0 0 14 14"><rect x="3" y="1" width="4" height="5" fill="#d8a070"/><rect x="8" y="1" width="4" height="5" fill="#d8a070"/><rect x="0.5" y="6.5" width="6" height="7" rx="2" fill="#f2b020"/><rect x="7" y="6" width="6.5" height="8" fill="#fff"/><text x="7.8" y="13" font-size="8" font-weight="bold" font-family="Liberation Sans" fill="#2030b0">?</text></svg>
<div class="t" style="left:73.00px;top:346.35px;font-size:11.3px;color:#98844a;">&gt;</div>
<div class="t" style="left:83.50px;top:345.55px;font-size:12.6px;color:#70a0d2;">pekan8</div>
<svg class="a" style="left:40px;top:366px;" width="7" height="10" viewBox="0 0 7 10"><path d="M1.5 1.5 L5 5 L1.5 8.5" fill="none" stroke="#8e8e8e" stroke-width="1"/></svg>
<svg class="a" style="left:54px;top:364px;" width="14" height="14" viewBox="0 0 14 14"><rect x="3" y="1" width="4" height="5" fill="#d8a070"/><rect x="8" y="1" width="4" height="5" fill="#d8a070"/><rect x="0.5" y="6.5" width="6" height="7" rx="2" fill="#f2b020"/><rect x="7" y="6" width="6.5" height="8" fill="#fff"/><text x="7.8" y="13" font-size="8" font-weight="bold" font-family="Liberation Sans" fill="#2030b0">?</text></svg>
<div class="t" style="left:73.00px;top:365.51px;font-size:11.3px;color:#98844a;">&gt;</div>
<div class="t" style="left:83.50px;top:364.71px;font-size:12.6px;color:#70a0d2;">tessss</div>
<svg class="a" style="left:40px;top:387px;" width="10" height="7" viewBox="0 0 10 7"><path d="M1 1 L5 5 L9 1" fill="none" stroke="#8a8a8a" stroke-width="1.1"/></svg>
<svg class="a" style="left:54px;top:383px;" width="14" height="14" viewBox="0 0 14 14"><rect x="3" y="1" width="4" height="5" fill="#d8a070"/><rect x="8" y="1" width="4" height="5" fill="#d8a070"/><rect x="0.5" y="6.5" width="6" height="7" rx="2" fill="#f2b020"/><rect x="7" y="6" width="6.5" height="8" fill="#fff"/><text x="7.8" y="13" font-size="8" font-weight="bold" font-family="Liberation Sans" fill="#2030b0">?</text></svg>
<div class="t" style="left:73.00px;top:384.67px;font-size:11.3px;color:#98844a;">&gt;</div>
<div class="t" style="left:83.50px;top:383.87px;font-size:12.6px;color:#70a0d2;">tugasakhir</div>
<svg class="a" style="left:57px;top:404px;" width="7" height="10" viewBox="0 0 7 10"><path d="M1.5 1.5 L5 5 L1.5 8.5" fill="none" stroke="#8e8e8e" stroke-width="1"/></svg>
<svg class="a" style="left:71px;top:402px;" width="14" height="14" viewBox="0 0 14 14"><path d="M3.5 0.5 H9 L11 2.5 V13.5 H3.5 Z" fill="#f4f2e0" stroke="#b8a870" stroke-width=".7"/><path d="M7.5 3 V7 Q7.5 9 6 9" fill="none" stroke="#2050c0" stroke-width="1.3"/><rect x="0.5" y="8" width="5" height="5.5" rx="2" fill="#f2b020"/><rect x="7.5" y="6.5" width="6" height="7.5" fill="#fff"/><text x="8" y="13" font-size="8" font-weight="bold" font-family="Liberation Sans" fill="#2030b0">?</text></svg>
<div class="t" style="left:88.50px;top:403.03px;font-size:12.6px;color:#c0c0c0;">PemesananTiketKonser.java</div>
<svg class="a" style="left:57px;top:424px;" width="7" height="10" viewBox="0 0 7 10"><path d="M1.5 1.5 L5 5 L1.5 8.5" fill="none" stroke="#8e8e8e" stroke-width="1"/></svg>
<svg class="a" style="left:71px;top:422px;" width="14" height="14" viewBox="0 0 14 14"><path d="M3.5 0.5 H9 L11 2.5 V13.5 H3.5 Z" fill="#f4f2e0" stroke="#b8a870" stroke-width=".7"/><path d="M7.5 3 V7 Q7.5 9 6 9" fill="none" stroke="#2050c0" stroke-width="1.3"/><rect x="0.5" y="8" width="5" height="5.5" rx="2" fill="#f2b020"/><rect x="7.5" y="6.5" width="6" height="7.5" fill="#fff"/><text x="8" y="13" font-size="8" font-weight="bold" font-family="Liberation Sans" fill="#2030b0">?</text></svg>
<div class="t" style="left:88.50px;top:422.19px;font-size:12.6px;color:#70a0d2;">TiketKonser2.java</div>
<svg class="a" style="left:40px;top:443px;" width="7" height="10" viewBox="0 0 7 10"><path d="M1.5 1.5 L5 5 L1.5 8.5" fill="none" stroke="#8e8e8e" stroke-width="1"/></svg>
<svg class="a" style="left:54px;top:441px;" width="14" height="14" viewBox="0 0 14 14"><rect x="3" y="1" width="4" height="5" fill="#d8a070"/><rect x="8" y="1" width="4" height="5" fill="#d8a070"/><rect x="0.5" y="6.5" width="6" height="7" rx="2" fill="#f2b020"/><rect x="7" y="6" width="6.5" height="8" fill="#fff"/><text x="7.8" y="13" font-size="8" font-weight="bold" font-family="Liberation Sans" fill="#2030b0">?</text></svg>
<div class="t" style="left:73.00px;top:442.15px;font-size:11.3px;color:#98844a;">&gt;</div>
<div class="t" style="left:83.50px;top:441.35px;font-size:12.6px;color:#70a0d2;">TugasKalkulator</div>
<svg class="a" style="left:40px;top:464px;" width="10" height="7" viewBox="0 0 10 7"><path d="M1 1 L5 5 L9 1" fill="none" stroke="#8a8a8a" stroke-width="1.1"/></svg>
<svg class="a" style="left:54px;top:460px;" width="14" height="14" viewBox="0 0 14 14"><rect x="1" y="1" width="5" height="5" fill="#d8a070" stroke="#a06a40" stroke-width=".5"/><rect x="7" y="1" width="5" height="5" fill="#d8a070" stroke="#a06a40" stroke-width=".5"/><rect x="1" y="7" width="5" height="5" fill="#d8a070" stroke="#a06a40" stroke-width=".5"/><rect x="7" y="7" width="5" height="5" fill="#d8a070" stroke="#a06a40" stroke-width=".5"/><rect x="7.5" y="8" width="5.5" height="6" rx="1" fill="#f2b020"/><rect x="8.5" y="9" width="3" height="4" fill="#fff3c0"/></svg>
<div class="t" style="left:71.50px;top:460.51px;font-size:12.6px;color:#c0c0c0;">TugasKalkulator2</div>
<svg class="a" style="left:57px;top:481px;" width="7" height="10" viewBox="0 0 7 10"><path d="M1.5 1.5 L5 5 L1.5 8.5" fill="none" stroke="#8e8e8e" stroke-width="1"/></svg>
<svg class="a" style="left:71px;top:479px;" width="14" height="14" viewBox="0 0 14 14"><path d="M2.5 0.5 H9 L12 3.5 V13.5 H2.5 Z" fill="#f4f2e0" stroke="#b8a870" stroke-width=".7"/><path d="M7.5 3 V8.5 Q7.5 10.5 5 10.5" fill="none" stroke="#2050c0" stroke-width="1.4"/><rect x="9" y="9" width="5" height="5" rx="1" fill="#f2b020"/></svg>
<div class="t" style="left:88.50px;top:479.67px;font-size:12.6px;color:#c0c0c0;">Kalkulator.java</div>
<svg class="a" style="left:40px;top:500px;" width="7" height="10" viewBox="0 0 7 10"><path d="M1.5 1.5 L5 5 L1.5 8.5" fill="none" stroke="#8e8e8e" stroke-width="1"/></svg>
<svg class="a" style="left:54px;top:498px;" width="14" height="14" viewBox="0 0 14 14"><path d="M2.5 0.5 H9 L12 3.5 V13.5 H2.5 Z" fill="#f4f2e0" stroke="#b8a870" stroke-width=".7"/><path d="M7.5 3 V8.5 Q7.5 10.5 5 10.5" fill="none" stroke="#2050c0" stroke-width="1.4"/><rect x="9" y="9" width="5" height="5" rx="1" fill="#f2b020"/></svg>
<div class="t" style="left:71.50px;top:498.83px;font-size:12.6px;color:#c0c0c0;">module-info.java</div>
<svg class="a" style="left:23px;top:519px;" width="7" height="10" viewBox="0 0 7 10"><path d="M1.5 1.5 L5 5 L1.5 8.5" fill="none" stroke="#8e8e8e" stroke-width="1"/></svg>
<svg class="a" style="left:37px;top:517px;" width="14" height="14" viewBox="0 0 14 14"><rect x="0.5" y="9" width="9" height="3" fill="#d07030"/><rect x="0.5" y="6" width="9" height="3" fill="#3a9a5a"/><rect x="1.5" y="3.5" width="8" height="2.5" fill="#3a80b0"/><path d="M9 13 L11.5 1 L14 13" fill="none" stroke="#e8b030" stroke-width="1.6"/></svg>
<div class="t" style="left:54.50px;top:517.99px;font-size:12.6px;color:#c0c0c0;">Referenced Libraries</div>
<svg class="a" style="left:37px;top:537px;" width="14" height="14" viewBox="0 0 14 14"><rect x="0.5" y="10" width="8" height="3" fill="#d07030"/><rect x="0.5" y="7" width="8" height="3" fill="#3a9a5a"/><rect x="1.5" y="4.5" width="7" height="2.5" fill="#3a80b0"/><rect x="4" y="1" width="6" height="3" fill="#f2d060"/><rect x="6.5" y="5.5" width="7" height="8.5" fill="#fff" stroke="#a0a8c0" stroke-width=".5"/><text x="7.5" y="13" font-size="8" font-weight="bold" font-family="Liberation Sans" fill="#2030b0">?</text></svg>
<div class="t" style="left:54.50px;top:537.15px;font-size:12.6px;color:#70a0d2;">com.jgoodies.common.jar</div>
<svg class="a" style="left:37px;top:556px;" width="14" height="14" viewBox="0 0 14 14"><rect x="0.5" y="10" width="8" height="3" fill="#d07030"/><rect x="0.5" y="7" width="8" height="3" fill="#3a9a5a"/><rect x="1.5" y="4.5" width="7" height="2.5" fill="#3a80b0"/><rect x="4" y="1" width="6" height="3" fill="#f2d060"/><rect x="6.5" y="5.5" width="7" height="8.5" fill="#fff" stroke="#a0a8c0" stroke-width=".5"/><text x="7.5" y="13" font-size="8" font-weight="bold" font-family="Liberation Sans" fill="#2030b0">?</text></svg>
<div class="t" style="left:54.50px;top:556.31px;font-size:12.6px;color:#70a0d2;">com.jgoodies.forms.jar</div>
<svg class="a" style="left:6px;top:577px;" width="7" height="10" viewBox="0 0 7 10"><path d="M1.5 1.5 L5 5 L1.5 8.5" fill="none" stroke="#8e8e8e" stroke-width="1"/></svg>
<svg class="a" style="left:20px;top:574px;" width="14" height="14" viewBox="0 0 14 14"><path d="M0.5 3 H4 L5 2 H9.5 V8 H0.5 Z" fill="#f8e4a0" stroke="#d0b070" stroke-width=".6"/><path d="M11.6 0.5 V5 Q11.6 7.2 8.8 7.2" fill="none" stroke="#5a8ed0" stroke-width="1.7"/><path d="M3.5 7.5 H13.5 L10.5 13.5 H6.5 Z" fill="#a8d4f4"/><rect x="0.3" y="8.3" width="5.2" height="5.2" rx="1.6" fill="#f0b030"/><rect x="8.3" y="8.6" width="4.8" height="4.6" rx=".6" fill="#f2a418"/></svg>
<div class="t" style="left:39.00px;top:576.27px;font-size:11.3px;color:#98844a;">&gt;</div>
<div class="t" style="left:49.50px;top:575.47px;font-size:12.6px;color:#70a0d2;">PrakSD19_2411532009</div>
<svg class="a" style="left:6px;top:596px;" width="7" height="10" viewBox="0 0 7 10"><path d="M1.5 1.5 L5 5 L1.5 8.5" fill="none" stroke="#8e8e8e" stroke-width="1"/></svg>
<svg class="a" style="left:20px;top:593px;" width="14" height="14" viewBox="0 0 14 14"><path d="M0.5 3 H4 L5 2 H9.5 V8 H0.5 Z" fill="#f8e4a0" stroke="#d0b070" stroke-width=".6"/><path d="M11.6 0.5 V5 Q11.6 7.2 8.8 7.2" fill="none" stroke="#5a8ed0" stroke-width="1.7"/><path d="M3.5 7.5 H13.5 L10.5 13.5 H6.5 Z" fill="#a8d4f4"/><rect x="0.3" y="8.3" width="5.2" height="5.2" rx="1.6" fill="#f0b030"/><rect x="8.3" y="8.6" width="4.8" height="4.6" rx=".6" fill="#f2a418"/></svg>
<div class="t" style="left:37.50px;top:594.63px;font-size:12.6px;color:#c0c0c0;">praktikum6 <span style="color:#a58c50">[main]</span></div>
<svg class="a" style="left:6px;top:615px;" width="7" height="10" viewBox="0 0 7 10"><path d="M1.5 1.5 L5 5 L1.5 8.5" fill="none" stroke="#8e8e8e" stroke-width="1"/></svg>
<svg class="a" style="left:20px;top:612px;" width="14" height="14" viewBox="0 0 14 14"><path d="M0.5 3 H4 L5 2 H9.5 V8 H0.5 Z" fill="#f8e4a0" stroke="#d0b070" stroke-width=".6"/><path d="M11.6 0.5 V5 Q11.6 7.2 8.8 7.2" fill="none" stroke="#5a8ed0" stroke-width="1.7"/><path d="M3.5 7.5 H13.5 L10.5 13.5 H6.5 Z" fill="#a8d4f4"/><rect x="0.3" y="8.3" width="5.2" height="5.2" rx="1.6" fill="#f0b030"/><rect x="8.3" y="8.6" width="4.8" height="4.6" rx=".6" fill="#f2a418"/></svg>
<div class="t" style="left:37.50px;top:613.79px;font-size:12.6px;color:#c0c0c0;">praktikum9 <span style="color:#a58c50">[main]</span></div>
<div class="a" style="left:264px;top:94px;width:10px;height:17px;background:#1d4d60;"></div>
<div class="t" style="left:289.50px;top:98.72px;font-size:12.5px;color:#8595a0;font-family:'Liberation Mono',monospace;">1</div>
<div class="t" style="left:307.00px;top:98.72px;font-size:12.5px;color:#e6e6e6;font-family:'Liberation Mono',monospace;"><span style="color:#cc6c1d">package</span><span style="color:#e6e6e6"> tugasakhir;</span></div>
<div class="t" style="left:734.50px;top:482.13px;font-size:12.5px;color:#e6e6e6;font-family:'Liberation Mono',monospace;"><span style="color:#e6e6e6">();</span></div>
<div class="t" style="left:282.00px;top:698.84px;font-size:12.5px;color:#8595a0;font-family:'Liberation Mono',monospace;">58</div>
<div class="t" style="left:367.00px;top:698.84px;font-size:12.5px;color:#e6e6e6;font-family:'Liberation Mono',monospace;"><span style="color:#d4e06a">setDefaultCloseOperation</span><span style="color:#e6e6e6">(</span><span style="color:#a7ec21">JFrame</span><span style="color:#e6e6e6">.</span><span style="color:#66e1f8">EXIT_ON_CLOSE</span><span style="color:#e6e6e6">);</span></div>
<div class="t" style="left:282.00px;top:715.51px;font-size:12.5px;color:#8595a0;font-family:'Liberation Mono',monospace;">59</div>
<div class="t" style="left:367.00px;top:715.51px;font-size:12.5px;color:#e6e6e6;font-family:'Liberation Mono',monospace;"><span style="color:#d4e06a">setBounds</span><span style="color:#e6e6e6">(</span><span style="color:#6897bb">100</span><span style="color:#e6e6e6">, </span><span style="color:#6897bb">100</span><span style="color:#e6e6e6">, </span><span style="color:#6897bb">613</span><span style="color:#e6e6e6">, </span><span style="color:#6897bb">585</span><span style="color:#e6e6e6">);</span></div>
<div class="t" style="left:282.00px;top:732.18px;font-size:12.5px;color:#8595a0;font-family:'Liberation Mono',monospace;">60</div>
<div class="t" style="left:367.00px;top:732.18px;font-size:12.5px;color:#e6e6e6;font-family:'Liberation Mono',monospace;"><span style="color:#66e1f8">contentPane</span><span style="color:#e6e6e6"> = </span><span style="color:#cc6c1d">new</span><span style="color:#e6e6e6"> </span><span style="color:#a7ec21">JPanel</span><span style="color:#e6e6e6">();</span></div>
<div class="t" style="left:282.00px;top:748.85px;font-size:12.5px;color:#8595a0;font-family:'Liberation Mono',monospace;">61</div>
<div class="t" style="left:367.00px;top:748.85px;font-size:12.5px;color:#e6e6e6;font-family:'Liberation Mono',monospace;"><span style="color:#66e1f8">contentPane</span><span style="color:#e6e6e6">.</span><span style="color:#a7ec21">setBackground</span><span style="color:#e6e6e6">(</span><span style="color:#cc6c1d">new</span><span style="color:#e6e6e6"> </span><span style="color:#a7ec21">Color</span><span style="color:#e6e6e6">(</span><span style="color:#6897bb">173</span><span style="color:#e6e6e6">, </span><span style="color:#6897bb">216</span><span style="color:#e6e6e6">, </span><span style="color:#6897bb">230</span><span style="color:#e6e6e6">));</span></div>
<div class="t" style="left:282.00px;top:765.52px;font-size:12.5px;color:#8595a0;font-family:'Liberation Mono',monospace;">62</div>
<div class="t" style="left:367.00px;top:765.52px;font-size:12.5px;color:#e6e6e6;font-family:'Liberation Mono',monospace;"><span style="color:#66e1f8">contentPane</span><span style="color:#e6e6e6">.</span><span style="color:#a7ec21">setBorder</span><span style="color:#e6e6e6">(</span><span style="color:#cc6c1d">new</span><span style="color:#e6e6e6"> </span><span style="color:#a7ec21">EmptyBorder</span><span style="color:#e6e6e6">(</span><span style="color:#6897bb">5</span><span style="color:#e6e6e6">, </span><span style="color:#6897bb">5</span><span style="color:#e6e6e6">, </span><span style="color:#6897bb">5</span><span style="color:#e6e6e6">, </span><span style="color:#6897bb">5</span><span style="color:#e6e6e6">));</span></div>
<div class="t" style="left:282.00px;top:782.19px;font-size:12.5px;color:#8595a0;font-family:'Liberation Mono',monospace;">63</div>
<div class="t" style="left:282.00px;top:798.86px;font-size:12.5px;color:#8595a0;font-family:'Liberation Mono',monospace;">64</div>
<div class="t" style="left:367.00px;top:798.86px;font-size:12.5px;color:#e6e6e6;font-family:'Liberation Mono',monospace;"><span style="color:#d4e06a">setContentPane</span><span style="color:#e6e6e6">(</span><span style="color:#66e1f8">contentPane</span><span style="color:#e6e6e6">);</span></div>
<div class="t" style="left:282.00px;top:815.53px;font-size:12.5px;color:#8595a0;font-family:'Liberation Mono',monospace;">65</div>
<div class="t" style="left:367.00px;top:815.53px;font-size:12.5px;color:#e6e6e6;font-family:'Liberation Mono',monospace;"><span style="color:#66e1f8">contentPane</span><span style="color:#e6e6e6">.</span><span style="color:#d4e06a">setLayout</span><span style="color:#e6e6e6">(</span><span style="color:#cc6c1d">null</span><span style="color:#e6e6e6">);</span></div>
<div class="t" style="left:282.00px;top:832.20px;font-size:12.5px;color:#8595a0;font-family:'Liberation Mono',monospace;">66</div>
<div class="a" style="left:264px;top:836px;width:41px;height:17px;background:#2f2f2f;"></div>
<div class="a" style="left:305px;top:836px;width:1283px;height:17px;background:#f0f0f0;border-top:1px solid #fff;border-bottom:1px solid #fff"></div>
<svg class="a" style="left:310px;top:840px;" width="8" height="10" viewBox="0 0 8 10"><path d="M7 0 L1 5 L7 10 Z" fill="#a0a0a0"/></svg>
<svg class="a" style="left:1557px;top:840px;" width="8" height="10" viewBox="0 0 8 10"><path d="M1 0 L7 5 L1 10 Z" fill="#a0a0a0"/></svg>
<div class="a" style="left:264px;top:853px;width:1336px;height:25px;background:#434547;background:linear-gradient(#3e3e40,#48494b)"></div>
<div class="a" style="left:264px;top:853px;width:62px;height:24px;background:#2b2b2b;"></div>
<div class="a" style="left:264px;top:853px;width:62px;height:2px;background:#3584c9;"></div>
<svg class="a" style="left:268px;top:857px;" width="13" height="14" viewBox="0 0 13 14"><rect x="0.5" y="0.5" width="12" height="13" rx="2" fill="#fafafa" stroke="#8aa0c0" stroke-width=".8"/><rect x="3" y="3" width="7" height="1.5" fill="#2e9a3a"/><rect x="3" y="5" width="2" height="1.5" fill="#e03030"/><rect x="3" y="7" width="7" height="1.5" fill="#2070d0"/><rect x="3" y="9" width="2" height="1.5" fill="#e03030"/><rect x="3" y="11" width="2" height="1.5" fill="#f0b020"/></svg>
<div class="t" style="left:284.00px;top:858.76px;font-size:12.1px;color:#e6e6e6;">Source</div>
<svg class="a" style="left:330px;top:857px;" width="13" height="13" viewBox="0 0 13 13"><rect x="0.5" y="0.5" width="12" height="11" fill="#f4f6fa" stroke="#6a88c8"/><rect x="1" y="1" width="11" height="2" fill="#4a70d8"/><rect x="2" y="5" width="2" height="1.5" fill="#8aa0c0"/><rect x="5" y="5" width="6" height="2" fill="#8aa0c0"/><rect x="2" y="8" width="2" height="1.5" fill="#8aa0c0"/><rect x="5" y="8" width="6" height="2" fill="#8aa0c0"/></svg>
<div class="t" style="left:346.00px;top:858.76px;font-size:12.1px;color:#bdbdbd;">Design</div>
<div class="a" style="left:859px;top:879px;width:2px;height:20px;background:#d0d0d0;"></div>
<div class="a" style="left:1004px;top:879px;width:2px;height:20px;background:#d0d0d0;"></div>
<div class="a" style="left:1142px;top:879px;width:2px;height:20px;background:#d0d0d0;"></div>
<div class="t" style="left:866.00px;top:881.96px;font-size:12.1px;color:#e0e0e0;">Writable</div>
<div class="t" style="left:1011.00px;top:881.96px;font-size:12.1px;color:#e0e0e0;">Smart Insert</div>
<div class="t" style="left:1149.00px;top:881.96px;font-size:12.1px;color:#e0e0e0;">1 : 1 : 0</div>
<div class="a" style="left:1279px;top:883.0px;width:2px;height:2px;background:#d0d0d0;"></div>
<div class="a" style="left:1279px;top:887.5px;width:2px;height:2px;background:#d0d0d0;"></div>
<div class="a" style="left:1279px;top:892.0px;width:2px;height:2px;background:#d0d0d0;"></div>
<div class="a" style="left:1577px;top:883.0px;width:2px;height:2px;background:#d8d8d8;"></div>
<div class="a" style="left:1577px;top:886.6px;width:2px;height:2px;background:#d8d8d8;"></div>
<div class="a" style="left:1577px;top:890.2px;width:2px;height:2px;background:#d8d8d8;"></div>
<div class="a" style="left:1577px;top:893.8px;width:2px;height:2px;background:#d8d8d8;"></div>
<svg class="a" style="left:1586px;top:882px;" width="10" height="14" viewBox="0 0 10 14"><circle cx="5" cy="5" r="4" fill="#f7d250" stroke="#e8a820" stroke-width=".8"/><rect x="3" y="8.5" width="4" height="2" fill="#f0f0f0"/><rect x="3" y="10.5" width="4" height="2.5" fill="#4a6ab0"/></svg>
<div class="a" style="left:111px;top:104px;width:625px;height:603px;border-radius:8px;background:#add8e6;border:1px solid #e89ab2;box-shadow:0 8px 34px rgba(0,0,0,.5),0 0 3px rgba(0,0,0,.6);overflow:hidden">
<div class="a" style="left:0;top:0;width:625px;height:31px;background:#f18da7"></div>
</div>
<svg class="a" style="left:119px;top:112px;" width="17" height="16" viewBox="0 0 17 16"><defs><linearGradient id="jg" x1="0" y1="0" x2="0" y2="1"><stop offset="0" stop-color="#ffffff"/><stop offset="1" stop-color="#ececec"/></linearGradient></defs><rect x="0.5" y="0.5" width="16" height="15" rx="2" fill="url(#jg)" stroke="#7a8898"/><path d="M8.5 2.5 Q11 4.5 9 7 Q7 9 8 9.5 Q6 8.5 7.5 6 Q9 4 8.5 2.5 Z" fill="#ec8a2a"/><path d="M4 9.2 H12.5 Q12 11.8 8.2 11.8 Q4.5 11.8 4 9.2 Z" fill="#6b86a8"/><path d="M12.3 9.5 Q14 10 12 11" fill="none" stroke="#6b86a8" stroke-width="1"/><path d="M3.2 13 Q8 14.6 13 13" fill="none" stroke="#6b86a8" stroke-width="1.2"/></svg>
<div class="a" style="left:607px;top:119px;width:11px;height:1px;background:#1a1a1a;"></div>
<div class="a" style="left:656px;top:115px;width:10px;height:10px;background:transparent;border:1px solid #1a1a1a;border-radius:1px"></div>
<svg class="a" style="left:704px;top:114px;" width="12" height="12" viewBox="0 0 12 12"><path d="M1 1 L11 11 M11 1 L1 11" stroke="#1a1a1a" stroke-width="1.1"/></svg>
<div class="t" style="left:227.00px;top:163.27px;font-size:18.3px;color:#2a2a2a;font-family:'Liberation Serif',serif;letter-spacing:0.5px;">Pemesanan Tiket Konser Sorrowful Reunion 2025</div>
<div class="t" style="left:150.50px;top:221.03px;font-size:13.9px;color:#2e2e2e;">Nama Pemesan</div>
<div class="t" style="left:150.50px;top:266.03px;font-size:13.9px;color:#2e2e2e;">NO HP</div>
<div class="t" style="left:150.50px;top:310.43px;font-size:13.9px;color:#2e2e2e;">E-mail</div>
<div class="t" style="left:150.50px;top:358.63px;font-size:13.9px;color:#2e2e2e;">Kategori</div>
<div class="t" style="left:150.50px;top:396.43px;font-size:13.9px;color:#2e2e2e;">Banyak Tiket</div>
<div class="a" style="left:330px;top:216px;width:329px;height:20px;background:#fff;box-shadow:inset 1px 1px 0 #8090a0, inset -1px -1px 0 #fff, inset -2px -2px 0 #a7b2bd"></div>
<div class="a" style="left:330px;top:261px;width:329px;height:20px;background:#fff;box-shadow:inset 1px 1px 0 #8090a0, inset -1px -1px 0 #fff, inset -2px -2px 0 #a7b2bd"></div>
<div class="a" style="left:330px;top:306px;width:329px;height:20px;background:#fff;box-shadow:inset 1px 1px 0 #8090a0, inset -1px -1px 0 #fff, inset -2px -2px 0 #a7b2bd"></div>
<div class="a" style="left:330px;top:392px;width:329px;height:20px;background:#fff;box-shadow:inset 1px 1px 0 #8090a0, inset -1px -1px 0 #fff, inset -2px -2px 0 #a7b2bd"></div>
<div class="a" style="left:330px;top:350px;width:329px;height:22px;background:#eeeeee;border:1px solid #8090a0;box-shadow:inset 1px 1px 0 #fff"></div>
<div class="a" style="left:638px;top:351px;width:20px;height:20px;background:linear-gradient(#f8fafd,#eef3f9 45%,#d2deec);border-left:1px solid #8090a0;box-shadow:inset 1px 1px 0 #fff"></div>
<svg class="a" style="left:644px;top:358px;" width="10" height="6" viewBox="0 0 10 6"><path d="M0 0 H10 L5 5.5 Z" fill="#111"/></svg>
<div class="t" style="left:333.70px;top:355.34px;font-size:13.3px;color:#222;">Pilih</div>
<div class="a" style="left:283px;top:446px;width:89px;height:22px;background:#fff0f4;border:1px solid #7c8c9c;border-radius:2px;box-shadow:inset 0 1px 0 #fff, inset 0 -1px 0 #fff"></div>
<div class="t" style="left:308.75px;top:450.94px;font-size:13.3px;color:#222;">Pesan</div>
<div class="a" style="left:442px;top:446px;width:89px;height:22px;background:#fff0f4;border:1px solid #7c8c9c;border-radius:2px;box-shadow:inset 0 1px 0 #fff, inset 0 -1px 0 #fff"></div>
<div class="t" style="left:469.40px;top:450.94px;font-size:13.3px;color:#222;">Reset</div>
<div class="a" style="left:133px;top:495px;width:592px;height:201px;background:#eeeeee;border-left:1px solid #7c8c9c;border-top:1px solid #7c8c9c;box-shadow:inset -2px -2px 0 #fff, inset -3px -3px 0 #8a98a6, inset -4px -4px 0 #fff"></div>
<div class="a" style="left:134px;top:496px;width:98px;height:21px;background:#eeeeee;border-top:1px solid #fff;border-left:1px solid #fff;border-right:1px solid #7c8c9c;border-bottom:1px solid #7c8c9c"></div>
<div class="t" style="left:134px;top:501.19px;width:98px;text-align:center;font-size:12.3px;color:#222">Nama Pemesan</div>
<div class="a" style="left:232px;top:496px;width:98px;height:21px;background:#eeeeee;border-top:1px solid #fff;border-left:1px solid #fff;border-right:1px solid #7c8c9c;border-bottom:1px solid #7c8c9c"></div>
<div class="t" style="left:232px;top:501.19px;width:98px;text-align:center;font-size:12.3px;color:#222">NO HP</div>
<div class="a" style="left:330px;top:496px;width:98px;height:21px;background:#eeeeee;border-top:1px solid #fff;border-left:1px solid #fff;border-right:1px solid #7c8c9c;border-bottom:1px solid #7c8c9c"></div>
<div class="t" style="left:330px;top:501.19px;width:98px;text-align:center;font-size:12.3px;color:#222">E-mail</div>
<div class="a" style="left:428px;top:496px;width:98px;height:21px;background:#eeeeee;border-top:1px solid #fff;border-left:1px solid #fff;border-right:1px solid #7c8c9c;border-bottom:1px solid #7c8c9c"></div>
<div class="t" style="left:428px;top:501.19px;width:98px;text-align:center;font-size:12.3px;color:#222">Kategori</div>
<div class="a" style="left:526px;top:496px;width:99px;height:21px;background:#eeeeee;border-top:1px solid #fff;border-left:1px solid #fff;border-right:1px solid #7c8c9c;border-bottom:1px solid #7c8c9c"></div>
<div class="t" style="left:526px;top:501.19px;width:99px;text-align:center;font-size:12.3px;color:#222">Banyak Tiket</div>
<div class="a" style="left:625px;top:496px;width:98px;height:21px;background:#eeeeee;border-top:1px solid #fff;border-left:1px solid #fff;border-right:1px solid #7c8c9c;border-bottom:1px solid #7c8c9c"></div>
<div class="t" style="left:625px;top:501.19px;width:98px;text-align:center;font-size:12.3px;color:#222">Harga Tiket</div>
</body></html>
